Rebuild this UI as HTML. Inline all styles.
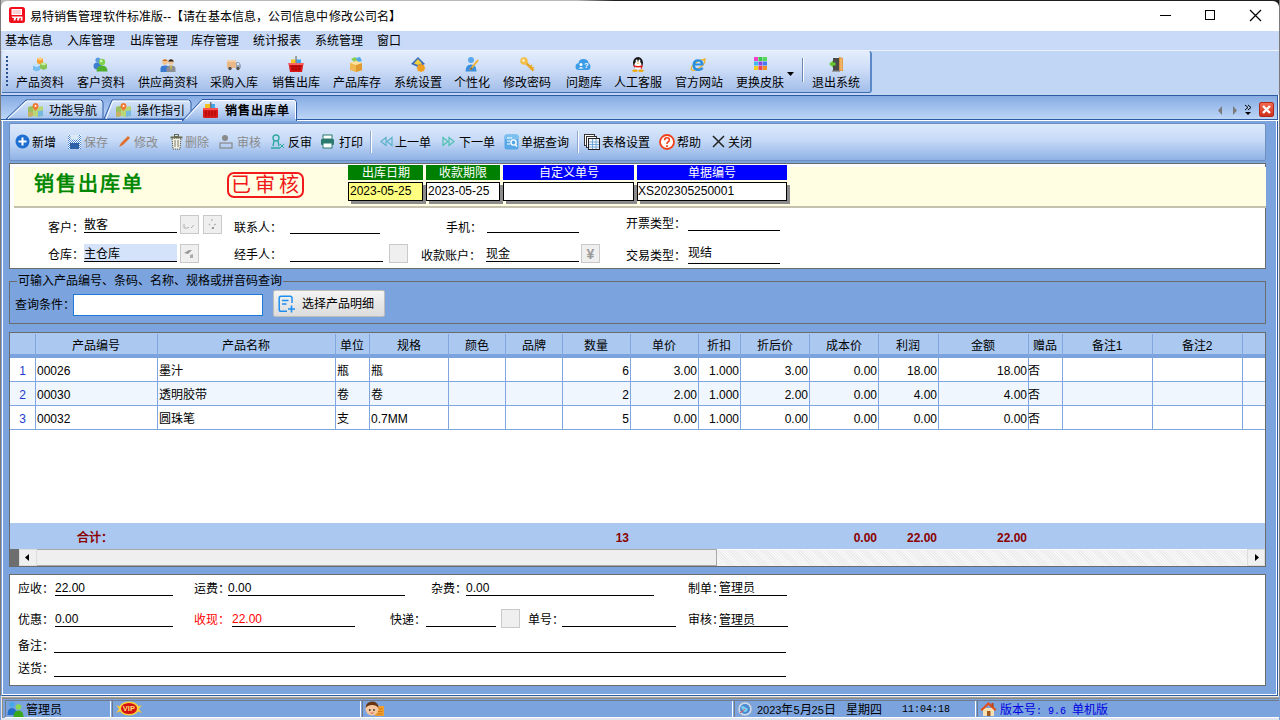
<!DOCTYPE html>
<html lang="zh-CN"><head><meta charset="utf-8">
<style>
*{box-sizing:border-box;margin:0;padding:0}
html,body{width:1280px;height:720px;overflow:hidden;background:#fff}
body{position:relative;font-family:"Liberation Sans",sans-serif;font-size:12px;color:#000}
.a{position:absolute}
.t{position:absolute;white-space:nowrap;line-height:14px;font-size:12px}
.ul{position:absolute;height:1px;background:#000}
.ib{position:absolute;width:19px;height:19px;background:#efefef;border:1px solid #c9c9c9}
.gh{position:absolute;top:0;height:22px;line-height:24px;text-align:center;border-right:1px solid #7fa6df}
.gc{position:absolute;height:24px;line-height:26px;border-right:1px solid #7fa6df;padding:0 2px;white-space:nowrap;overflow:hidden}
.r{text-align:right}
</style></head><body>
<!-- ===== title bar ===== -->
<div class="a" style="left:0;top:0;width:1280px;height:31px;background:linear-gradient(90deg,#b9b9b9 0,#b9b9b9 577px,#1e1e1e 615px,#1e1e1e)"></div><div class="a" style="left:1px;top:1px;width:1278px;height:30px;background:#fff;border-radius:6px 6px 0 0"></div>
<svg class="a" style="left:9px;top:7px" width="16" height="16"><rect x="0" y="0" width="16" height="16" rx="2.5" fill="#f20d1a"/><rect x="2.5" y="2" width="10.5" height="6" fill="#fff"/><path d="M3.5 4H12M3.5 6H12" stroke="#f58a90" stroke-width="0.8"/><path d="M2.5 9.5H13.5V13.5H11.5L12 11H10.5L10 13.5H8L8.5 11H7L6.5 13.5H4.5L5 11H3.5Z" fill="#fff"/></svg>
<div class="t" style="left:30px;top:10px;letter-spacing:0.1px">易特销售管理软件标准版--【请在基本信息，公司信息中修改公司名】</div>
<div class="a" style="left:1160px;top:15px;width:11px;height:1px;background:#000"></div>
<div class="a" style="left:1205px;top:10px;width:10px;height:10px;border:1px solid #000"></div>
<svg class="a" style="left:1249px;top:9px" width="13" height="13"><path d="M1 1L12 12M12 1L1 12" stroke="#000" stroke-width="1.2"/></svg>

<!-- ===== menu ===== -->
<div class="a" style="left:0;top:31px;width:1280px;height:19px;background:#c8daf7"></div>
<div class="t" style="left:5px;top:34px">基本信息</div>
<div class="t" style="left:67px;top:34px">入库管理</div>
<div class="t" style="left:130px;top:34px">出库管理</div>
<div class="t" style="left:191px;top:34px">库存管理</div>
<div class="t" style="left:253px;top:34px">统计报表</div>
<div class="t" style="left:315px;top:34px">系统管理</div>
<div class="t" style="left:377px;top:34px">窗口</div>

<!-- ===== toolbar ===== -->
<div class="a" style="left:0;top:50px;width:1280px;height:45px;background:#c1d6f5;border-top:1px solid #edf3fc"></div>
<div class="a" style="left:2px;top:51px;width:870px;height:42px;border-radius:3px 3px 3px 0;border-right:2px solid #5b88c8;border-bottom:1px solid #3f6cb0;background:linear-gradient(#e3edfc,#d0dff8 40%,#a3bee9)"></div>
<div class="a" style="left:6px;top:56px;width:2px;height:30px;background:repeating-linear-gradient(#2a4f8e 0 2px,transparent 2px 4px)"></div>
<div class="t" style="left:16px;top:76px">产品资料</div>
<svg class="a" style="left:32px;top:56px" width="16" height="16"><path d="M5 3L8 1.5L11 3V7L8 8.5L5 7Z" fill="#f5a030"/><path d="M5 3L8 1.5L11 3L8 4.5Z" fill="#ffd080"/><path d="M1 9.5L4.5 8L8 9.5V14L4.5 15.5L1 14Z" fill="#78bdf0"/><path d="M1 9.5L4.5 8L8 9.5L4.5 11Z" fill="#c8e8ff"/><path d="M8 8L11.5 6.5L15 8V12.5L11.5 14L8 12.5Z" fill="#86c456"/><path d="M8 8L11.5 6.5L15 8L11.5 9.5Z" fill="#c8f0a0"/></svg>
<div class="t" style="left:77px;top:76px">客户资料</div>
<svg class="a" style="left:92px;top:56px" width="16" height="16"><circle cx="6" cy="4" r="2.6" fill="#5b9be0"/><ellipse cx="5.5" cy="10" rx="4" ry="3.5" fill="#3d7fd0"/><circle cx="10" cy="6" r="3.2" fill="#7ed050"/><path d="M4.5 15.5Q4.5 9.5 10 9.5T15.5 15.5Z" fill="#4fb030"/><circle cx="9.2" cy="5" r="1.2" fill="#d8ffc0"/></svg>
<div class="t" style="left:138px;top:76px">供应商资料</div>
<svg class="a" style="left:160px;top:56px" width="16" height="16"><circle cx="5" cy="6" r="2.8" fill="#f3c48c"/><path d="M2.2 5Q5 1.5 7.8 5Z" fill="#c86a20"/><path d="M0.5 16V12.5Q0.5 9.5 5 9.5T9.5 12.5V16Z" fill="#3a7ad0"/><circle cx="11" cy="6" r="2.8" fill="#f0c498"/><path d="M8 5.5Q11 1 14 5.5Z" fill="#222"/><path d="M6.5 16V12.5Q6.5 9.5 11 9.5T15.5 12.5V16Z" fill="#8a8e96"/><path d="M10.2 9.5H11.8L11 15Z" fill="#f0d020"/></svg>
<div class="t" style="left:210px;top:76px">采购入库</div>
<svg class="a" style="left:226px;top:56px" width="16" height="16"><rect x="1" y="4" width="9" height="8" fill="#e8b888"/><rect x="1" y="4" width="9" height="2" fill="#f4d0a8"/><path d="M10 6H13L15 9V12H10Z" fill="#98aac0"/><rect x="11" y="7" width="2" height="2" fill="#d8e8f8"/><circle cx="4" cy="12.5" r="1.7" fill="#505050"/><circle cx="12" cy="12.5" r="1.7" fill="#505050"/></svg>
<div class="t" style="left:272px;top:76px">销售出库</div>
<svg class="a" style="left:288px;top:56px" width="16" height="16"><rect x="3" y="3.5" width="5" height="4" fill="#f5c518"/><rect x="8" y="3.5" width="5" height="4" fill="#3aa8f0"/><rect x="7.3" y="0" width="1.5" height="7" fill="#8a8a8a"/><path d="M0.5 7H15.5L14 16H2Z" fill="#d81818"/><rect x="0.5" y="7" width="15" height="2" fill="#ff6060"/><path d="M3 10.5H13M3 13H13" stroke="#a00000" stroke-width="0.8"/><path d="M5 9V15M8 9V15M11 9V15" stroke="#a00000" stroke-width="0.8"/></svg>
<div class="t" style="left:333px;top:76px">产品库存</div>
<svg class="a" style="left:348px;top:56px" width="16" height="16"><path d="M2 7L8 5L14 7V14L8 16L2 14Z" fill="#f0b850"/><path d="M8 9V16L14 14V7Z" fill="#e09a30"/><path d="M3 3L7 1L10 4L6 6Z" fill="#88cc50"/><path d="M8 2L12 1L14 5L10 6Z" fill="#50a8e8"/><path d="M2 7L8 9L14 7L8 5Z" fill="#ffe0a0"/></svg>
<div class="t" style="left:394px;top:76px">系统设置</div>
<svg class="a" style="left:410px;top:56px" width="16" height="16"><path d="M8 1L15 8L8 11L1 8Z" fill="#3c6cb8"/><path d="M8 3L12 7.5L8 9L4 7.5Z" fill="#f0d040"/><circle cx="11" cy="12" r="3.6" fill="#f0a020"/><circle cx="11" cy="12" r="1.5" fill="#7a4a10"/><path d="M11 7.8V16.2M6.8 12H15.2M8 9L14 15M14 9L8 15" stroke="#f0a020" stroke-width="1.4"/></svg>
<div class="t" style="left:454px;top:76px">个性化</div>
<svg class="a" style="left:464px;top:56px" width="16" height="16"><circle cx="7" cy="4" r="3" fill="#5aa8f0"/><path d="M1.5 15.5Q1.5 8.5 7 8.5T12.5 15.5Z" fill="#3a8ee0"/><path d="M6 14L14 4" stroke="#f0b030" stroke-width="2"/><path d="M6 14L7 11.5L8.5 12.8Z" fill="#555"/></svg>
<div class="t" style="left:503px;top:76px">修改密码</div>
<svg class="a" style="left:519px;top:56px" width="16" height="16"><circle cx="5" cy="5" r="3.8" fill="#f2c04a"/><circle cx="4.5" cy="4.5" r="1.3" fill="#fff4d0"/><path d="M7.5 7.5L14.5 14.5" stroke="#e8a828" stroke-width="2.6"/><path d="M11 11L13 9M12.8 12.8L14.5 11" stroke="#e8a828" stroke-width="1.6"/></svg>
<div class="t" style="left:566px;top:76px">问题库</div>
<svg class="a" style="left:575px;top:56px" width="16" height="16"><path d="M3.5 14Q0.5 14 0.5 10.5Q0.5 7.5 3.5 7.2Q4 3 8.5 3Q13 3 13.5 7Q15.5 7.5 15.5 10.5Q15.5 14 12.5 14Z" fill="#3c9ce8"/><circle cx="6" cy="8.5" r="1.5" fill="#fff"/><path d="M3.5 12.5Q6 9.5 8.5 12.5Z" fill="#fff"/><text x="9" y="12" font-size="7.5" font-weight="bold" fill="#fff" font-family="Liberation Sans">?</text></svg>
<div class="t" style="left:614px;top:76px">人工客服</div>
<svg class="a" style="left:630px;top:56px" width="16" height="16"><ellipse cx="8" cy="7" rx="5" ry="6" fill="#151515"/><ellipse cx="8" cy="9.5" rx="3.6" ry="4" fill="#fff"/><ellipse cx="6.6" cy="5" rx="1" ry="1.4" fill="#fff"/><ellipse cx="9.4" cy="5" rx="1" ry="1.4" fill="#fff"/><path d="M6.5 6.8H9.5L8 8Z" fill="#f0a010"/><path d="M3.5 9Q8 11 12.5 9V10.5Q8 12.5 3.5 10.5Z" fill="#e01818"/><path d="M10 10L11.5 13.5L12.5 10Z" fill="#e01818"/><ellipse cx="5" cy="14.8" rx="2.8" ry="1.2" fill="#f0a810"/><ellipse cx="11" cy="14.8" rx="2.8" ry="1.2" fill="#f0a810"/></svg>
<div class="t" style="left:675px;top:76px">官方网站</div>
<svg class="a" style="left:690px;top:56px" width="16" height="16"><ellipse cx="8" cy="9" rx="8" ry="3.2" transform="rotate(-35 8 9)" fill="none" stroke="#f0b428" stroke-width="1.3"/><path d="M13.5 9.5H5Q5.2 12.5 8.5 12.5Q10.5 12.5 12 11L13.5 13Q11.5 15 8.3 15Q2.5 15 2.5 9Q2.5 3.2 8.3 3.2Q13.8 3.2 13.5 9.5ZM5.2 7.5H10.8Q10.5 5.5 8.2 5.5Q5.7 5.5 5.2 7.5Z" fill="#2a8ee0"/><path d="M13 4.5Q15.5 1.5 15 4" fill="none" stroke="#f0b428" stroke-width="1.3"/></svg>
<div class="t" style="left:736px;top:76px">更换皮肤</div>
<svg class="a" style="left:752px;top:56px" width="16" height="16"><rect x="2" y="1" width="4" height="4" fill="#f040c8"/><rect x="6.5" y="1" width="4" height="4" fill="#3cc848"/><rect x="11" y="1" width="4" height="4" fill="#58d858"/><rect x="2" y="5.5" width="4" height="4" fill="#40b8f0"/><rect x="6.5" y="5.5" width="4" height="4" fill="#8a40e0"/><rect x="11" y="5.5" width="4" height="4" fill="#4878f0"/><rect x="2" y="10" width="4" height="4" fill="#f0d020"/><rect x="6.5" y="10" width="4" height="4" fill="#f04848"/><rect x="11" y="10" width="4" height="4" fill="#f09020"/></svg>
<div class="t" style="left:812px;top:76px">退出系统</div>
<svg class="a" style="left:828px;top:56px" width="16" height="16"><rect x="5" y="2" width="7" height="13" fill="#4a4a4a"/><path d="M11 1L15 2V15L11 15Z" fill="#d8903a"/><path d="M12 2L14.5 2.6V14.5H12Z" fill="#f0b060"/><path d="M1 8L5 4.5V6.5H7.5V9.5H5V11.5Z" fill="#68c830"/><rect x="4" y="14.5" width="8" height="1.2" fill="#888"/></svg>
<div class="a" style="left:802px;top:58px;width:1px;height:24px;background:#6a86b0;box-shadow:1px 0 0 #fff"></div>
<svg class="a" style="left:787px;top:72px" width="8" height="5"><path d="M0 0H7L3.5 4Z" fill="#000"/></svg>

<!-- ===== tabs ===== -->
<div class="a" style="left:1px;top:95px;width:1277px;height:25px;background:linear-gradient(#86abe3,#bcd5f6);border-top:1px solid #2c5aa5;border-bottom:1px solid #2c5aa5;border-right:1px solid #2c5aa5"></div>
<div class="a" style="left:1px;top:120px;width:1279px;height:1px;background:#fff"></div>
<svg class="a" style="left:0;top:94px" width="310" height="28">
 <defs><linearGradient id="tg" x1="0" y1="0" x2="0" y2="1"><stop offset="0" stop-color="#d6e4f9"/><stop offset="1" stop-color="#a9c6ef"/></linearGradient>
 <linearGradient id="tga" x1="0" y1="0" x2="0" y2="1"><stop offset="0" stop-color="#e0ebfb"/><stop offset="0.45" stop-color="#c4d8f6"/><stop offset="1" stop-color="#95b6e8"/></linearGradient></defs>
 <path d="M6 25 L26 6 H100 Q103 6 103 9 V25 Z" fill="url(#tg)" stroke="#2c5aa5" stroke-width="1"/>
 <path d="M8 25 L27 7 H101" fill="none" stroke="#fff" stroke-width="1"/>
 <path d="M104 25 L112 6 H188 Q191 6 191 9 V25 Z" fill="url(#tg)" stroke="#2c5aa5" stroke-width="1"/>
 <path d="M106 25 L113 7 H189" fill="none" stroke="#fff" stroke-width="1"/>
 <path d="M182 27 L202 5.5 H293 Q296.5 5.5 296.5 9 V27 Z" fill="url(#tga)" stroke="#2c5aa5" stroke-width="1"/>
 <path d="M184 27 L203 6.5 H294 Q295.5 6.5 295.5 9 V27" fill="none" stroke="#fff" stroke-width="1"/>
 <rect x="184" y="25" width="112" height="3" fill="#95b6e8"/>
</svg>
<div class="t" style="left:49px;top:104px">功能导航</div>
<div class="t" style="left:137px;top:104px">操作指引</div>
<div class="t" style="left:225px;top:104px;font-weight:bold;letter-spacing:1px">销售出库单</div>
<svg class="a" style="left:28px;top:103px" width="16" height="14"><path d="M0 4L5 3L10 4L15 3V13L10 14L5 13L0 14Z" fill="#b8d878"/><path d="M0 4L5 3V13L0 14Z" fill="#98c060"/><path d="M10 8L15 7.5V13L10 14Z" fill="#78b8e0"/><path d="M0 9L5 8.5V13L0 14Z" fill="#c8b068"/><path d="M7.5 0C5.5 0 4.5 1.5 4.5 3C4.5 5 7.5 8 7.5 8S10.5 5 10.5 3C10.5 1.5 9.5 0 7.5 0Z" fill="#f07830"/><circle cx="7.5" cy="3" r="1" fill="#fff"/></svg>
<svg class="a" style="left:116px;top:103px" width="16" height="14"><path d="M0 4L5 3L10 4L15 3V13L10 14L5 13L0 14Z" fill="#b8d878"/><path d="M0 4L5 3V13L0 14Z" fill="#98c060"/><path d="M10 8L15 7.5V13L10 14Z" fill="#78b8e0"/><path d="M0 9L5 8.5V13L0 14Z" fill="#c8b068"/><path d="M7.5 0C5.5 0 4.5 1.5 4.5 3C4.5 5 7.5 8 7.5 8S10.5 5 10.5 3C10.5 1.5 9.5 0 7.5 0Z" fill="#f07830"/><circle cx="7.5" cy="3" r="1" fill="#fff"/></svg>
<svg class="a" style="left:203px;top:102px" width="16" height="16"><rect x="2" y="2" width="5" height="4" fill="#f0c020"/><rect x="7" y="2" width="5" height="4" fill="#40a8e8"/><rect x="7" y="0" width="1.5" height="7" fill="#777"/><rect x="0" y="6" width="15" height="10" rx="1.5" fill="#d41a1a"/><rect x="0" y="6" width="15" height="2" fill="#ff5050"/><path d="M3 9V14M6 9V14M9 9V14M12 9V14" stroke="#a00" stroke-width="1"/></svg>
<!-- tab right controls -->
<svg class="a" style="left:1216px;top:104px" width="50" height="14">
 <path d="M6 2V11L2 6.5Z" fill="#7a7a7a"/><path d="M17 2V11L21 6.5Z" fill="#7a7a7a"/>
 <path d="M29 1L32 3.5L29 6M32 1L35 3.5L32 6" fill="none" stroke="#000" stroke-width="1"/><path d="M29 8H35L32 11Z" fill="#000"/>
</svg>
<div class="a" style="left:1259px;top:102px;width:15px;height:15px;background:linear-gradient(#f26a50,#d0301d);border:1px solid #b02a1a;border-radius:2px"></div>
<svg class="a" style="left:1259px;top:102px" width="15" height="15"><path d="M4 4L11 11M11 4L4 11" stroke="#fff" stroke-width="2.4"/></svg>

<!-- ===== frame ===== -->
<div class="a" style="left:0;top:121px;width:1280px;height:576px;background:#7ba3de"></div>
<div class="a" style="left:2px;top:121px;width:1px;height:574px;background:#fff"></div>
<div class="a" style="left:1276px;top:121px;width:1px;height:574px;background:#fff"></div>
<div class="a" style="left:1277px;top:121px;width:1px;height:575px;background:#2c5aa5"></div>
<div class="a" style="left:2px;top:694px;width:1275px;height:1px;background:#fff"></div>
<div class="a" style="left:2px;top:695px;width:1276px;height:1px;background:#2c5aa5"></div>
<div class="a" style="left:0;top:0;width:1px;height:720px;background:#7a7a7a"></div>
<div class="a" style="left:1278px;top:121px;width:1px;height:575px;background:#eef2f8"></div><div class="a" style="left:1279px;top:0;width:1px;height:720px;background:#7a7a7a"></div>

<!-- doc toolbar -->
<svg width="0" height="0" style="position:absolute"><defs><pattern id="chk" width="2" height="2" patternUnits="userSpaceOnUse"><rect width="1" height="1" fill="#fff"/><rect x="1" y="1" width="1" height="1" fill="#fff"/></pattern></defs></svg>
<div class="a" style="left:9px;top:123px;width:1257px;height:38px;border:1px solid #6f8fbf;border-radius:2px;background:linear-gradient(#dde9fb,#c6daf7 45%,#8fb2e6)"></div>
<svg class="a" style="left:15px;top:134px" width="16" height="16"><circle cx="7.5" cy="7.5" r="7" fill="#1e6fd0"/><path d="M7.5 3.5V11.5M3.5 7.5H11.5" stroke="#fff" stroke-width="2"/></svg>
<div class="t" style="left:32px;top:136px;color:#000">新增</div>
<svg class="a" style="left:67px;top:134px" width="16" height="16"><rect x="1" y="1" width="13" height="14" fill="#4a86d0"/><path d="M1 1H14V15H1Z" fill="url(#chk)"/><rect x="3.5" y="1" width="8" height="4.5" fill="#dbe8f6"/><rect x="3" y="9" width="9" height="6" fill="#2d62a8"/></svg>
<div class="t" style="left:84px;top:136px;color:#8a8a8a">保存</div>
<svg class="a" style="left:117px;top:134px" width="16" height="16"><path d="M2 13L4 9L11 2L13 4L6 11Z" fill="#e07030"/></svg>
<div class="t" style="left:134px;top:136px;color:#8a8a8a">修改</div>
<svg class="a" style="left:169px;top:134px" width="16" height="16"><path d="M3 4H12L11 15H4Z" fill="#f4f4ec" stroke="#5a5a40" stroke-width="1" stroke-dasharray="1.2 0.8"/><rect x="1.5" y="2.5" width="12" height="1.8" fill="#6a6a50"/><rect x="5.5" y="0.5" width="4" height="2" fill="none" stroke="#6a6a50"/><path d="M6 6V13M9 6V13" stroke="#6a6a50" stroke-width="0.9"/></svg>
<div class="t" style="left:185px;top:136px;color:#8a8a8a">删除</div>
<svg class="a" style="left:219px;top:134px" width="16" height="16"><circle cx="6" cy="4" r="3" fill="#8a8a8a"/><rect x="1" y="9" width="12" height="5" fill="none" stroke="#888" stroke-width="1.2"/></svg>
<div class="t" style="left:237px;top:136px;color:#8a8a8a">审核</div>
<svg class="a" style="left:270px;top:134px" width="16" height="16"><circle cx="6" cy="4" r="3" fill="none" stroke="#30a8a0" stroke-width="1.4"/><path d="M1 14H10M4 7L3 12M8 7L9 12" stroke="#30a8a0" stroke-width="1.4"/><path d="M10 10L14 14M14 10L10 14" stroke="#30a8a0"/></svg>
<div class="t" style="left:288px;top:136px;color:#000">反审</div>
<svg class="a" style="left:320px;top:134px" width="16" height="16"><rect x="3" y="1" width="9" height="4" fill="#fff" stroke="#2b7a70"/><rect x="1" y="5" width="13" height="6" rx="1" fill="#2b7a70"/><rect x="3" y="9" width="9" height="5" fill="#fff" stroke="#2b7a70"/></svg>
<div class="t" style="left:339px;top:136px;color:#000">打印</div>
<svg class="a" style="left:379px;top:134px" width="16" height="16"><path d="M7 3.5V11.5L2 7.5Z" fill="none" stroke="#5ab0c8" stroke-width="1.2"/><path d="M13 3.5V11.5L8 7.5Z" fill="none" stroke="#5ab0c8" stroke-width="1.2"/></svg>
<div class="t" style="left:395px;top:136px;color:#000">上一单</div>
<svg class="a" style="left:441px;top:134px" width="16" height="16"><path d="M2 3.5V11.5L7 7.5Z" fill="none" stroke="#4cc0b0" stroke-width="1.2"/><path d="M8 3.5V11.5L13 7.5Z" fill="none" stroke="#4cc0b0" stroke-width="1.2"/></svg>
<div class="t" style="left:459px;top:136px;color:#000">下一单</div>
<svg class="a" style="left:504px;top:134px" width="16" height="16"><rect x="0.5" y="0.5" width="14" height="15" rx="2" fill="#58a8e8"/><rect x="0.5" y="0.5" width="14" height="5" rx="2" fill="#7cc0f0"/><path d="M3 4H8M3 7H6M3 10H6" stroke="#fff" stroke-width="1.1"/><circle cx="9.5" cy="8.5" r="2.6" fill="none" stroke="#fff" stroke-width="1.4"/><path d="M11.3 10.5L13 12.5" stroke="#fff" stroke-width="1.5"/></svg>
<div class="t" style="left:521px;top:136px;color:#000">单据查询</div>
<svg class="a" style="left:584px;top:134px" width="16" height="16"><rect x="0.5" y="0.5" width="10" height="11" fill="#fff" stroke="#333"/><rect x="2.5" y="2.5" width="10" height="11" fill="#fff" stroke="#333"/><rect x="4.5" y="4.5" width="11" height="11" fill="#f4f8fc" stroke="#222"/><path d="M5 8H15M5 10.5H15M5 13H15M8.5 5V15M12 5V15" stroke="#5a9ad0" stroke-width="0.8"/></svg>
<div class="t" style="left:602px;top:136px;color:#000">表格设置</div>
<svg class="a" style="left:659px;top:134px" width="16" height="16"><circle cx="8" cy="8" r="7" fill="#fff" stroke="#f0401a" stroke-width="1.8"/><path d="M5.6 6.2Q5.6 3.8 8 3.8Q10.4 3.8 10.4 6Q10.4 7.3 9 8Q8 8.6 8 10" fill="none" stroke="#f0401a" stroke-width="1.6"/><rect x="7.1" y="11.2" width="1.8" height="1.8" fill="#f0401a"/></svg>
<div class="t" style="left:677px;top:136px;color:#000">帮助</div>
<svg class="a" style="left:711px;top:134px" width="16" height="16"><path d="M2 2L13 13M13 2L2 13" stroke="#222" stroke-width="1.5"/></svg>
<div class="t" style="left:728px;top:136px;color:#000">关闭</div>
<div class="a" style="left:370px;top:131px;width:1px;height:22px;background:#8fa8cc;box-shadow:1px 0 0 #fff"></div>
<div class="a" style="left:577px;top:131px;width:1px;height:22px;background:#8fa8cc;box-shadow:1px 0 0 #fff"></div>

<!-- yellow header -->
<div class="a" style="left:9px;top:163px;width:1257px;height:106px;background:#fff;border:1px solid #6b6b6b"></div>
<div class="a" style="left:14px;top:167px;width:1252px;height:41px;background:#fffde2;border-bottom:2px solid #c4c2ae"></div>

<div class="a" style="left:34px;top:171px;font-size:20px;line-height:26px;letter-spacing:2px;font-weight:bold;color:#008800;font-family:'Liberation Serif',serif;white-space:nowrap">销售出库单</div>
<div class="a" style="left:227px;top:172px;width:77px;height:26px;border:2px solid #f21a1a;border-radius:7px;"></div>
<div class="a" style="left:231px;top:173px;font-size:20px;line-height:24px;color:#f01818;font-family:'Liberation Serif',serif;letter-spacing:4px;white-space:nowrap">已审核</div>
<div class="a" style="left:348px;top:165px;width:75px;height:15px;background:#008000;color:#fff;text-align:center;line-height:17px">出库日期</div>
<div class="a" style="left:426px;top:165px;width:74px;height:15px;background:#008000;color:#fff;text-align:center;line-height:17px">收款期限</div>
<div class="a" style="left:503px;top:165px;width:131px;height:15px;background:#0000ff;color:#fff;text-align:center;line-height:17px">自定义单号</div>
<div class="a" style="left:637px;top:165px;width:150px;height:15px;background:#0000ff;color:#fff;text-align:center;line-height:17px">单据编号</div>
<div class="a" style="left:351px;top:185px;width:75px;height:19px;background:#8c8c8c"></div>
<div class="a" style="left:429px;top:185px;width:74px;height:19px;background:#8c8c8c"></div>
<div class="a" style="left:506px;top:185px;width:131px;height:19px;background:#8c8c8c"></div>
<div class="a" style="left:640px;top:185px;width:150px;height:19px;background:#8c8c8c"></div>
<div class="a" style="left:348px;top:182px;width:75px;height:19px;background:#ffff80;border:1px solid #000;line-height:17px;padding-left:1px">2023-05-25</div>
<div class="a" style="left:426px;top:182px;width:74px;height:19px;background:#fff;border:1px solid #000;line-height:17px;padding-left:1px">2023-05-25</div>
<div class="a" style="left:503px;top:182px;width:131px;height:19px;background:#fff;border:1px solid #000"></div>
<div class="a" style="left:637px;top:182px;width:150px;height:19px;background:#fff;border:1px solid #000;line-height:17px;padding-left:0px">XS202305250001</div>
<!-- form -->
<div class="t" style="left:48px;top:221px">客户：</div>
<div class="t" style="left:84px;top:218px">散客</div>
<div class="ul" style="left:84px;top:232px;width:93px"></div>
<div class="ib" style="left:180px;top:215px"></div>
<div class="ib" style="left:203px;top:215px"></div>
<div class="t" style="left:234px;top:221px">联系人：</div>
<div class="ul" style="left:290px;top:233px;width:90px"></div>
<div class="t" style="left:446px;top:221px">手机：</div>
<div class="ul" style="left:487px;top:232px;width:92px"></div>
<div class="t" style="left:626px;top:217px">开票类型：</div>
<div class="ul" style="left:688px;top:230px;width:92px"></div>
<div class="t" style="left:48px;top:248px">仓库：</div>
<div class="a" style="left:84px;top:244px;width:93px;height:17px;background:#d4e3fa"></div>
<div class="t" style="left:84px;top:247px">主仓库</div>
<div class="ul" style="left:84px;top:261px;width:93px"></div>
<div class="ib" style="left:180px;top:244px"></div>
<div class="t" style="left:234px;top:248px">经手人：</div>
<div class="ul" style="left:290px;top:261px;width:93px"></div>
<div class="ib" style="left:389px;top:244px"></div>
<div class="t" style="left:421px;top:249px">收款账户：</div>
<div class="t" style="left:486px;top:247px">现金</div>
<div class="ul" style="left:486px;top:261px;width:93px"></div>
<div class="ib" style="left:581px;top:244px;color:#9a9a9a;text-align:center;line-height:18px;font-weight:bold;font-size:14px">¥</div>
<div class="t" style="left:626px;top:249px">交易类型：</div>
<div class="t" style="left:688px;top:246px">现结</div>
<div class="ul" style="left:688px;top:263px;width:92px"></div>

<svg class="a" style="left:180px;top:215px" width="19" height="19"><path d="M4 9V13H8L9 12M11 13L14 10" fill="none" stroke="#b0b0b0" stroke-width="1"/></svg>
<svg class="a" style="left:203px;top:215px" width="19" height="19"><path d="M9 4V6M6 9L7 10M13 9L11 10M10 12L9 14" stroke="#b0b0b0" stroke-width="1.2"/><rect x="9" y="12" width="2" height="2" fill="#999"/></svg>
<svg class="a" style="left:180px;top:244px" width="19" height="19"><path d="M4 9L9 6H12L8 10Z" fill="#999"/><path d="M10 11L13 10V14H10Z" fill="#aaa"/></svg>
<!-- query group -->
<div class="a" style="left:9px;top:281px;width:1257px;height:43px;border:1px solid #6b6b6b"></div>
<div class="a" style="left:17px;top:274px;height:14px;background:#7ba3de;padding:0 1px;line-height:14px;white-space:nowrap">可输入产品编号、条码、名称、规格或拼音码查询</div>
<div class="t" style="left:15px;top:298px">查询条件：</div>
<div class="a" style="left:73px;top:294px;width:190px;height:22px;background:#fff;border:1px solid #1e7ad8"></div>
<div class="a" style="left:273px;top:290px;width:112px;height:27px;background:linear-gradient(#f4f4f4,#dcdcdc);border:1px solid #bdbdbd;border-radius:2px"></div>
<svg class="a" style="left:278px;top:295px" width="18" height="18"><path d="M14 8V3Q14 1.2 12.2 1.2H3Q1.2 1.2 1.2 3V14.5Q1.2 16.3 3 16.3H9" fill="none" stroke="#1e8ff0" stroke-width="1.5"/><path d="M4 5.5H10.5M4 9H8.5" stroke="#1e8ff0" stroke-width="1.5"/><path d="M13.5 10.5V17.5M10 14H17" stroke="#1e8ff0" stroke-width="1.6"/></svg>
<div class="t" style="left:302px;top:297px">选择产品明细</div>


<div class="a" style="left:9px;top:332px;width:1257px;height:235px;background:#fff;border:1px solid #6b6b6b;overflow:hidden">
<div class="a" style="left:0;top:0;width:1256px;height:25px;background:#abc9f0;border-bottom:4px solid #7ba3de"></div>
<div class="gh" style="left:0px;width:26px;top:1px"></div>
<div class="gh" style="left:25px;width:123px;top:1px">产品编号</div>
<div class="gh" style="left:147px;width:179px;top:1px">产品名称</div>
<div class="gh" style="left:325px;width:35px;top:1px">单位</div>
<div class="gh" style="left:359px;width:80px;top:1px">规格</div>
<div class="gh" style="left:438px;width:58px;top:1px">颜色</div>
<div class="gh" style="left:495px;width:58px;top:1px">品牌</div>
<div class="gh" style="left:552px;width:69px;top:1px">数量</div>
<div class="gh" style="left:620px;width:69px;top:1px">单价</div>
<div class="gh" style="left:688px;width:43px;top:1px">折扣</div>
<div class="gh" style="left:730px;width:70px;top:1px">折后价</div>
<div class="gh" style="left:799px;width:70px;top:1px">成本价</div>
<div class="gh" style="left:868px;width:61px;top:1px">利润</div>
<div class="gh" style="left:928px;width:91px;top:1px">金额</div>
<div class="gh" style="left:1018px;width:35px;top:1px">赠品</div>
<div class="gh" style="left:1052px;width:91px;top:1px">备注1</div>
<div class="gh" style="left:1142px;width:91px;top:1px">备注2</div>
<div class="gh" style="left:1232px;width:24px;top:1px"></div>
<div class="a" style="left:0;top:25px;width:1256px;height:24px;background:#fff;border-bottom:1px solid #7fa6df"></div>
<div class="gc" style="left:0px;width:26px;top:25px;color:#1a3ad0;text-align:center;">1</div>
<div class="gc" style="left:25px;width:123px;top:25px;">00026</div>
<div class="gc" style="left:147px;width:179px;top:25px;">墨汁</div>
<div class="gc" style="left:325px;width:35px;top:25px;">瓶</div>
<div class="gc" style="left:359px;width:80px;top:25px;">瓶</div>
<div class="gc" style="left:438px;width:58px;top:25px;"></div>
<div class="gc" style="left:495px;width:58px;top:25px;"></div>
<div class="gc r" style="left:552px;width:69px;top:25px;padding:0 1px 0 0;">6</div>
<div class="gc r" style="left:620px;width:69px;top:25px;padding:0 1px 0 0;">3.00</div>
<div class="gc r" style="left:688px;width:43px;top:25px;padding:0 1px 0 0;">1.000</div>
<div class="gc r" style="left:730px;width:70px;top:25px;padding:0 1px 0 0;">3.00</div>
<div class="gc r" style="left:799px;width:70px;top:25px;padding:0 1px 0 0;">0.00</div>
<div class="gc r" style="left:868px;width:61px;top:25px;padding:0 1px 0 0;">18.00</div>
<div class="gc r" style="left:928px;width:91px;top:25px;padding:0 1px 0 0;">18.00</div>
<div class="gc" style="left:1018px;width:35px;top:25px;padding:0;">否</div>
<div class="gc" style="left:1052px;width:91px;top:25px;"></div>
<div class="gc" style="left:1142px;width:91px;top:25px;"></div>
<div class="gc" style="left:1232px;width:24px;top:25px"></div>
<div class="a" style="left:0;top:49px;width:1256px;height:24px;background:#f0f6fd;border-bottom:1px solid #7fa6df"></div>
<div class="gc" style="left:0px;width:26px;top:49px;color:#1a3ad0;text-align:center;">2</div>
<div class="gc" style="left:25px;width:123px;top:49px;">00030</div>
<div class="gc" style="left:147px;width:179px;top:49px;">透明胶带</div>
<div class="gc" style="left:325px;width:35px;top:49px;">卷</div>
<div class="gc" style="left:359px;width:80px;top:49px;">卷</div>
<div class="gc" style="left:438px;width:58px;top:49px;"></div>
<div class="gc" style="left:495px;width:58px;top:49px;"></div>
<div class="gc r" style="left:552px;width:69px;top:49px;padding:0 1px 0 0;">2</div>
<div class="gc r" style="left:620px;width:69px;top:49px;padding:0 1px 0 0;">2.00</div>
<div class="gc r" style="left:688px;width:43px;top:49px;padding:0 1px 0 0;">1.000</div>
<div class="gc r" style="left:730px;width:70px;top:49px;padding:0 1px 0 0;">2.00</div>
<div class="gc r" style="left:799px;width:70px;top:49px;padding:0 1px 0 0;">0.00</div>
<div class="gc r" style="left:868px;width:61px;top:49px;padding:0 1px 0 0;">4.00</div>
<div class="gc r" style="left:928px;width:91px;top:49px;padding:0 1px 0 0;">4.00</div>
<div class="gc" style="left:1018px;width:35px;top:49px;padding:0;">否</div>
<div class="gc" style="left:1052px;width:91px;top:49px;"></div>
<div class="gc" style="left:1142px;width:91px;top:49px;"></div>
<div class="gc" style="left:1232px;width:24px;top:49px"></div>
<div class="a" style="left:0;top:73px;width:1256px;height:24px;background:#fff;border-bottom:1px solid #7fa6df"></div>
<div class="gc" style="left:0px;width:26px;top:73px;color:#1a3ad0;text-align:center;">3</div>
<div class="gc" style="left:25px;width:123px;top:73px;">00032</div>
<div class="gc" style="left:147px;width:179px;top:73px;">圆珠笔</div>
<div class="gc" style="left:325px;width:35px;top:73px;">支</div>
<div class="gc" style="left:359px;width:80px;top:73px;">0.7MM</div>
<div class="gc" style="left:438px;width:58px;top:73px;"></div>
<div class="gc" style="left:495px;width:58px;top:73px;"></div>
<div class="gc r" style="left:552px;width:69px;top:73px;padding:0 1px 0 0;">5</div>
<div class="gc r" style="left:620px;width:69px;top:73px;padding:0 1px 0 0;">0.00</div>
<div class="gc r" style="left:688px;width:43px;top:73px;padding:0 1px 0 0;">1.000</div>
<div class="gc r" style="left:730px;width:70px;top:73px;padding:0 1px 0 0;">0.00</div>
<div class="gc r" style="left:799px;width:70px;top:73px;padding:0 1px 0 0;">0.00</div>
<div class="gc r" style="left:868px;width:61px;top:73px;padding:0 1px 0 0;">0.00</div>
<div class="gc r" style="left:928px;width:91px;top:73px;padding:0 1px 0 0;">0.00</div>
<div class="gc" style="left:1018px;width:35px;top:73px;padding:0;">否</div>
<div class="gc" style="left:1052px;width:91px;top:73px;"></div>
<div class="gc" style="left:1142px;width:91px;top:73px;"></div>
<div class="gc" style="left:1232px;width:24px;top:73px"></div>
<div class="a" style="left:0;top:190px;width:1256px;height:27px;background:#abc9f0"></div>
<div style="position:absolute;top:192px;height:27px;line-height:27px;color:#8b0000;font-weight:bold;white-space:nowrap;left:67px">合计：</div>
<div style="position:absolute;top:192px;height:27px;line-height:27px;color:#8b0000;font-weight:bold;white-space:nowrap;left:560px;width:60px;text-align:right;padding-right:1px">13</div>
<div style="position:absolute;top:192px;height:27px;line-height:27px;color:#8b0000;font-weight:bold;white-space:nowrap;left:808px;width:60px;text-align:right;padding-right:1px">0.00</div>
<div style="position:absolute;top:192px;height:27px;line-height:27px;color:#8b0000;font-weight:bold;white-space:nowrap;left:868px;width:60px;text-align:right;padding-right:1px">22.00</div>
<div style="position:absolute;top:192px;height:27px;line-height:27px;color:#8b0000;font-weight:bold;white-space:nowrap;left:958px;width:60px;text-align:right;padding-right:1px">22.00</div>
<div class="a" style="left:0;top:216px;width:1256px;height:17px;background:repeating-linear-gradient(45deg,#f8f8f8 0 1px,#ececec 1px 2px);border-top:1px solid #fff"></div>
<div class="a" style="left:0;top:216px;width:9px;height:17px;background:#6e6e6e"></div>
<div class="a" style="left:9px;top:216px;width:18px;height:17px;background:#f0f0f0;border:1px solid #ddd"></div>
<svg class="a" style="left:14px;top:221px" width="6" height="8"><path d="M5 0V7L1 3.5Z" fill="#000"/></svg>
<div class="a" style="left:27px;top:216px;width:680px;height:17px;background:#efefef;border:1px solid #a8a8a8;border-left:none"></div>
<div class="a" style="left:1237px;top:216px;width:18px;height:17px;background:#f0f0f0;border:1px solid #ddd"></div>
<svg class="a" style="left:1244px;top:221px" width="6" height="8"><path d="M1 0V7L5 3.5Z" fill="#000"/></svg>
</div>
<div class="a" style="left:9px;top:574px;width:1257px;height:112px;background:#fff;border:1px solid #6b6b6b"></div>
<div class="t" style="left:18px;top:582px">应收：</div><div class="t" style="left:55px;top:581px">22.00</div><div class="ul" style="left:55px;top:595px;width:118px"></div>
<div class="t" style="left:194px;top:582px">运费：</div><div class="t" style="left:228px;top:581px">0.00</div><div class="ul" style="left:228px;top:595px;width:177px"></div>
<div class="t" style="left:431px;top:582px">杂费：</div><div class="t" style="left:466px;top:581px">0.00</div><div class="ul" style="left:466px;top:595px;width:188px"></div>
<div class="t" style="left:688px;top:582px">制单：</div><div class="t" style="left:719px;top:581px">管理员</div><div class="ul" style="left:719px;top:595px;width:68px"></div>
<div class="t" style="left:18px;top:613px">优惠：</div><div class="t" style="left:55px;top:612px">0.00</div><div class="ul" style="left:55px;top:626px;width:118px"></div>
<div class="t" style="left:194px;top:613px;color:#f00">收现：</div><div class="t" style="left:232px;top:612px;color:#f00">22.00</div><div class="ul" style="left:232px;top:626px;width:123px"></div>
<div class="t" style="left:390px;top:613px">快递：</div><div class="ul" style="left:426px;top:626px;width:70px"></div>
<div class="a" style="left:501px;top:609px;width:19px;height:19px;background:#efefef;border:1px solid #c9c9c9"></div>
<div class="t" style="left:528px;top:613px">单号：</div><div class="ul" style="left:562px;top:626px;width:114px"></div>
<div class="t" style="left:688px;top:613px">审核：</div><div class="t" style="left:719px;top:613px">管理员</div><div class="ul" style="left:719px;top:626px;width:69px"></div>
<div class="t" style="left:18px;top:639px">备注：</div><div class="ul" style="left:54px;top:652px;width:732px"></div>
<div class="t" style="left:18px;top:662px">送货：</div><div class="ul" style="left:54px;top:676px;width:732px"></div>

<!-- status bar -->
<div class="a" style="left:0;top:696px;width:1280px;height:24px;background:#7ba3de"></div>
<div class="a" style="left:1px;top:696px;width:1278px;height:1px;background:#ececec"></div>
<div class="a" style="left:1px;top:697px;width:1278px;height:2px;background:linear-gradient(#b4b0a8,#7d7a74)"></div>
<div class="a" style="left:1px;top:696px;width:1px;height:24px;background:#e8e8e8"></div>
<div class="a" style="left:2px;top:697px;width:1px;height:23px;background:#8f8c86"></div>
<div class="a" style="left:5px;top:700px;width:1274px;height:1px;background:#6f7a8a"></div>
<div class="a" style="left:5px;top:700px;width:1px;height:18px;background:#6f7a8a"></div>
<div class="a" style="left:5px;top:717px;width:1274px;height:1px;background:#fff"></div>
<div class="a" style="left:1px;top:718px;width:1278px;height:2px;background:#dfe6ef"></div>
<svg class="a" style="left:7px;top:701px" width="17" height="16"><circle cx="5" cy="3.5" r="2.8" fill="#48a8e8"/><path d="M0.5 14Q0.5 7 5 7T9.5 14Z" fill="#1f6fc8"/><circle cx="11.5" cy="6" r="2.8" fill="#8ad850"/><path d="M6.5 16Q6.5 9.5 11.5 9.5T16.5 16Z" fill="#3aa81e"/></svg>
<div class="t" style="left:26px;top:703px">管理员</div>
<div class="a" style="left:110px;top:701px;width:1px;height:16px;background:#fff"></div><div class="a" style="left:112px;top:701px;width:1px;height:16px;background:#6f7a8a"></div>
<svg class="a" style="left:116px;top:701px" width="26" height="15"><path d="M0 4L5 6L5 10L0 12L3 8Z" fill="#f8c838"/><path d="M26 4L21 6L21 10L26 12L23 8Z" fill="#f8c838"/><ellipse cx="13" cy="7.5" rx="10" ry="7" fill="#f8d040"/><ellipse cx="13" cy="7.5" rx="8" ry="5.5" fill="#d41010"/><text x="6.8" y="10.3" font-size="7.5" fill="#ffe070" font-weight="bold" font-family="Liberation Sans">VIP</text></svg>
<div class="a" style="left:360px;top:701px;width:1px;height:16px;background:#fff"></div><div class="a" style="left:362px;top:701px;width:1px;height:16px;background:#6f7a8a"></div>
<svg class="a" style="left:364px;top:700px" width="21" height="17"><rect x="11" y="6" width="9" height="10" fill="#f0a030"/><path d="M12.5 9H18.5M12.5 11.5H18.5M12.5 14H18.5" stroke="#c87010" stroke-width="0.8"/><circle cx="8" cy="9" r="6.5" fill="#f7c8a0"/><path d="M1.5 8Q2 1.5 8.5 1.5Q14.5 2 14.5 8Q12 4.5 8 5Q4 5 1.5 8Z" fill="#6a3410"/><circle cx="5.8" cy="10" r="0.9" fill="#333"/><circle cx="10" cy="10" r="0.9" fill="#333"/><path d="M6.5 12.8Q8 13.8 9.5 12.8" stroke="#c04030" stroke-width="0.8" fill="none"/></svg>
<div class="a" style="left:732px;top:701px;width:1px;height:16px;background:#fff"></div><div class="a" style="left:734px;top:701px;width:1px;height:16px;background:#6f7a8a"></div>
<svg class="a" style="left:737px;top:701px" width="16" height="16"><circle cx="8" cy="8" r="7.2" fill="#c8d8ec" stroke="#8aa0c0" stroke-width="0.8"/><circle cx="8" cy="8" r="5" fill="#4c88d0"/><path d="M4 6Q6 4 8 6T11 7L10 10Q8 12 6 10Z" fill="#7ad0f0"/><path d="M3 12L8 8" stroke="#e05050" stroke-width="1"/></svg>
<div class="t" style="left:757px;top:703px"><span style="font-size:11px">2023</span>年<span style="font-size:11px">5</span>月<span style="font-size:11px">25</span>日</div>
<div class="t" style="left:846px;top:703px">星期四</div>
<div class="t" style="left:902px;top:703px;font-family:'Liberation Mono',monospace;font-size:10px">11:04:18</div>
<div class="a" style="left:975px;top:701px;width:1px;height:16px;background:#fff"></div><div class="a" style="left:977px;top:701px;width:1px;height:16px;background:#6f7a8a"></div>
<svg class="a" style="left:980px;top:701px" width="17" height="16"><rect x="3" y="7" width="11" height="8" fill="#f8e0b0"/><path d="M0.5 8.5L8.5 1L16.5 8.5L15 10L8.5 4L2 10Z" fill="#e0501a"/><rect x="7" y="10" width="3.5" height="5" fill="#a05a20"/><rect x="11.5" y="2" width="2" height="4" fill="#c04010"/></svg>
<div class="t" style="left:1000px;top:703px;color:#0000e0">版本号<span style="font-family:'Liberation Mono',monospace;font-size:10px">: 9.6 </span>单机版</div>

</body></html>
